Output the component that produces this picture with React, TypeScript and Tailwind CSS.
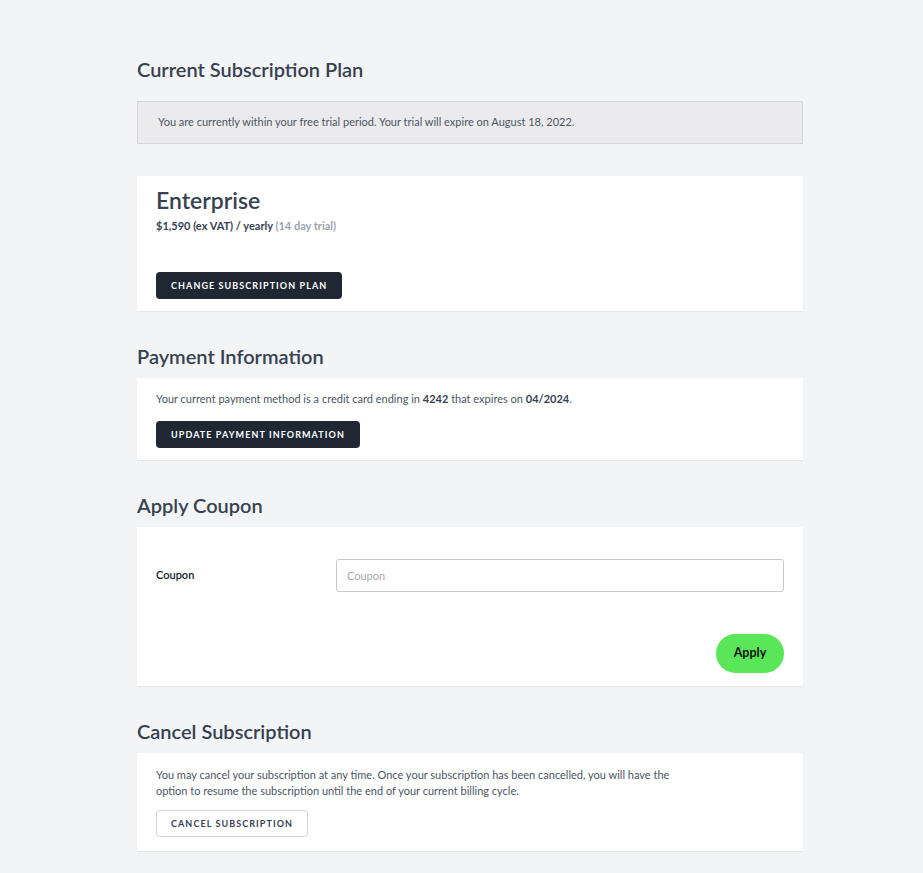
import React from 'react'

const font = { fontFamily: 'Lato, "Open Sans", sans-serif' }

function Heading({ children }: { children: React.ReactNode }) {
  return <h2 className="text-[20px] font-semibold leading-[22px] text-[#374151]">{children}</h2>
}

export default function App() {
  return (
    <div className="min-h-[873px] w-full bg-[#f3f4f6] pt-[58px] pb-[22px]" style={font}>
      <div className="ml-[137px] flex w-[666px] flex-col">
        <Heading>Current Subscription Plan</Heading>

        <div className="mt-[21px] flex h-[43px] items-center border border-[#d6d6da] bg-[#ebebee] px-[20px] text-[11px] text-[#4b5563]">
          You are currently within your free trial period. Your trial will expire on August 18, 2022.
        </div>

        <div className="mt-[32px] flex h-[135px] flex-col bg-white px-[19px] pt-[10px] shadow-[0_1px_1px_rgba(0,0,0,0.05)]">
          <div className="text-[23px] font-semibold leading-[28px] text-[#374151]">Enterprise</div>
          <div className="mt-[5px] text-[11px] font-bold leading-[14px] text-[#374151]">
            $1,590 (ex VAT) / yearly <span className="text-[#9ca3af]">(14 day trial)</span>
          </div>
          <div className="mt-[38px]">
            <button className="h-[27px] rounded-[4px] bg-[#1f2733] px-[15px] text-[9px] font-bold tracking-[0.12em] text-white">
              CHANGE SUBSCRIPTION PLAN
            </button>
          </div>
        </div>

        <div className="mt-[34px]">
          <Heading>Payment Information</Heading>
        </div>
        <div className="mt-[11px] flex h-[82px] flex-col bg-white px-[19px] pt-[13px] shadow-[0_1px_1px_rgba(0,0,0,0.05)]">
          <div className="text-[11px] leading-[16px] text-[#4b5563]">
            Your current payment method is a credit card ending in <b className="text-[#374151]">4242</b> that expires on{' '}
            <b className="text-[#374151]">04/2024</b>.
          </div>
          <div className="mt-[13px]">
            <button className="h-[27px] rounded-[4px] bg-[#1f2733] px-[15px] text-[9px] font-bold tracking-[0.12em] text-white">
              UPDATE PAYMENT INFORMATION
            </button>
          </div>
        </div>

        <div className="mt-[34px]">
          <Heading>Apply Coupon</Heading>
        </div>
        <div className="mt-[11px] flex h-[159px] flex-col bg-white px-[19px] pt-[32px] shadow-[0_1px_1px_rgba(0,0,0,0.05)]">
          <div className="flex items-center">
            <label className="w-[180px] text-[11px] font-semibold text-[#111827]">Coupon</label>
            <input
              placeholder="Coupon"
              className="h-[33px] flex-1 rounded-[3px] border border-[#c7c7cc] px-[10px] text-[11px] outline-none placeholder:text-[#a8a8ad]"
            />
          </div>
          <div className="mt-[42px] flex justify-end">
            <button className="h-[39px] w-[68px] rounded-full bg-[#59e659] text-[12.5px] font-bold text-[#111]">Apply</button>
          </div>
        </div>

        <div className="mt-[34px]">
          <Heading>Cancel Subscription</Heading>
        </div>
        <div className="mt-[11px] flex h-[98px] flex-col bg-white px-[19px] pt-[14px] shadow-[0_1px_1px_rgba(0,0,0,0.05)]">
          <p className="w-[540px] text-[11px] leading-[16px] text-[#4b5563]">
            You may cancel your subscription at any time. Once your subscription has been cancelled, you will have the
            option to resume the subscription until the end of your current billing cycle.
          </p>
          <div className="mt-[10px]">
            <button className="h-[27px] rounded-[4px] border border-[#d1d5db] bg-white px-[14px] text-[9px] font-bold tracking-[0.12em] text-[#374151]">
              CANCEL SUBSCRIPTION
            </button>
          </div>
        </div>
      </div>
    </div>
  )
}
